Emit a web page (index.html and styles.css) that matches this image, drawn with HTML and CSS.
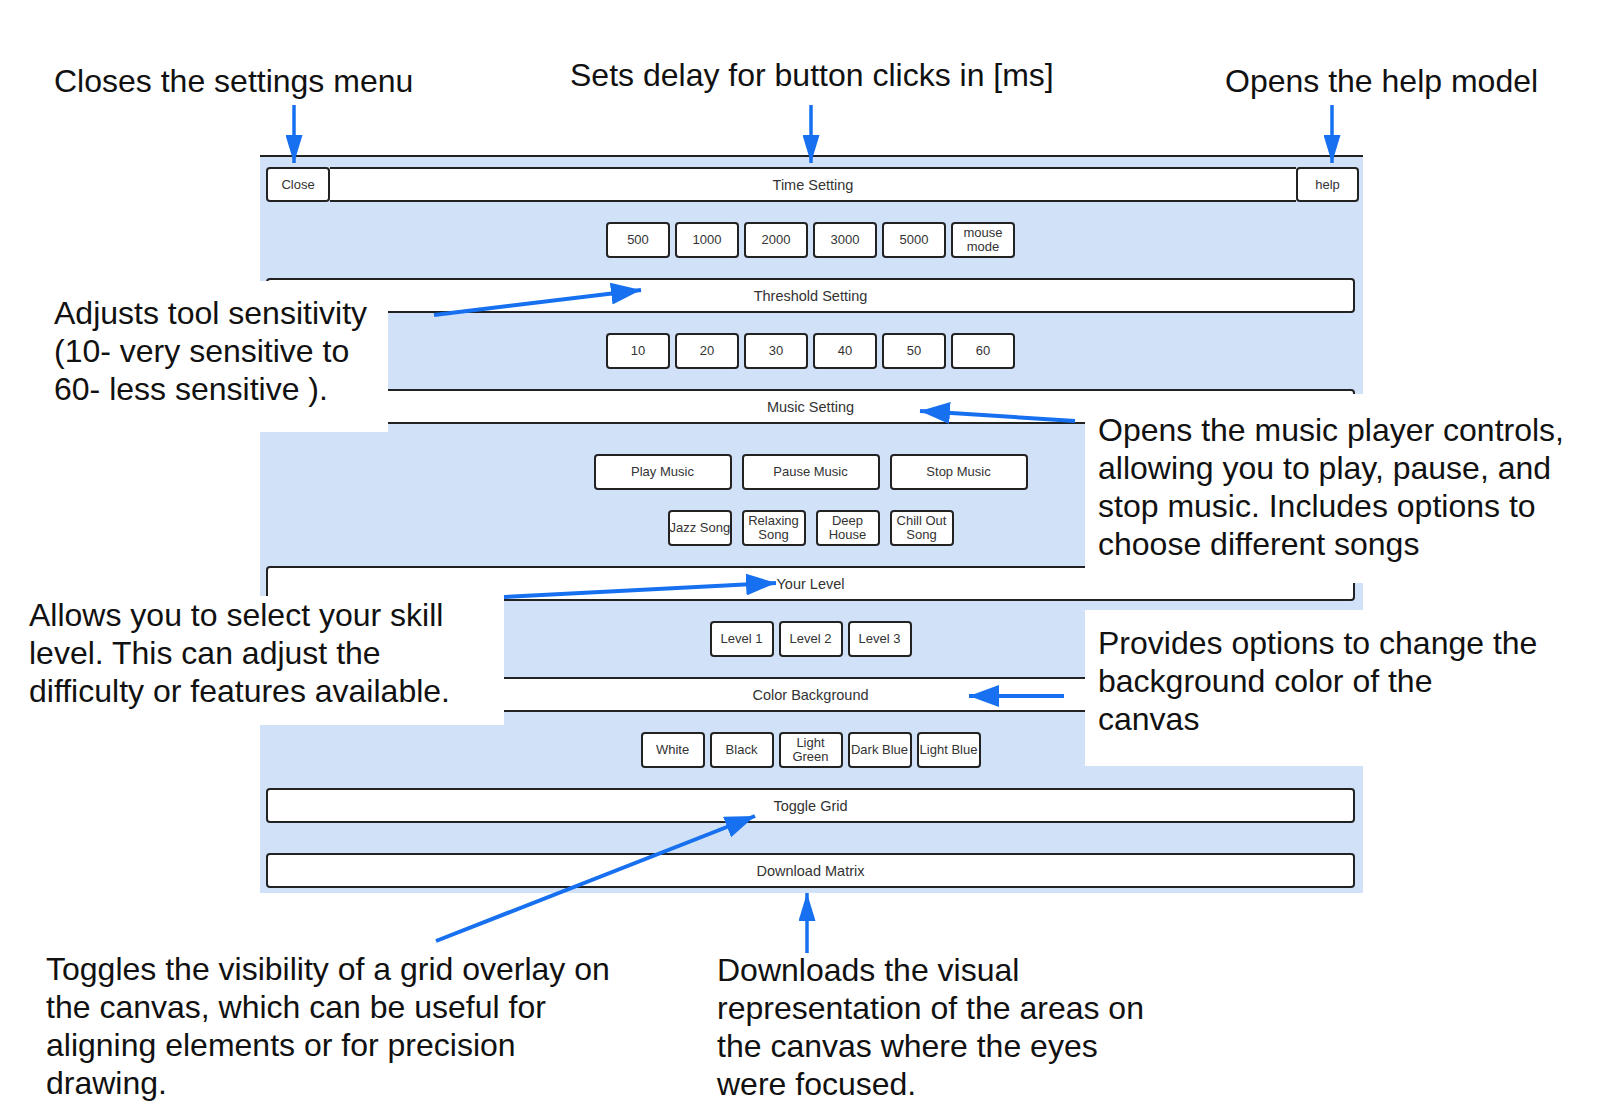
FILE: index.html
```html
<!DOCTYPE html>
<html lang="en">
<head>
    <meta charset="UTF-8">
    <meta name="viewport" content="width=device-width, initial-scale=1.0">
    <title>Settings menu</title>
    <link rel="stylesheet" href="styles.css">
</head>
<body>
<div class="page">

    <div class="settings">
        <div class="topbar">
            <button class="btn-close">Close</button>
            <button class="bar bar-title">Time Setting</button>
            <button class="btn-help">help</button>
        </div>

        <div class="row">
            <button>500</button>
            <button>1000</button>
            <button>2000</button>
            <button>3000</button>
            <button>5000</button>
            <button>mouse mode</button>
        </div>

        <button class="bar">Threshold Setting</button>
        <div class="row">
            <button>10</button>
            <button>20</button>
            <button>30</button>
            <button>40</button>
            <button>50</button>
            <button>60</button>
        </div>

        <button class="bar">Music Setting</button>
        <div class="row row-music">
            <button class="btn-wide">Play Music</button>
            <button class="btn-wide">Pause Music</button>
            <button class="btn-wide">Stop Music</button>
        </div>
        <div class="row row-songs">
            <button class="nowrap">Jazz Song</button>
            <button>Relaxing Song</button>
            <button>Deep House</button>
            <button>Chill Out Song</button>
        </div>

        <button class="bar">Your Level</button>
        <div class="row">
            <button>Level 1</button>
            <button>Level 2</button>
            <button>Level 3</button>
        </div>

        <button class="bar">Color Background</button>
        <div class="row">
            <button>White</button>
            <button>Black</button>
            <button>Light Green</button>
            <button>Dark Blue</button>
            <button>Light Blue</button>
        </div>

        <button class="bar">Toggle Grid</button>
        <button class="bar bar-download">Download Matrix</button>
    </div>

    <!-- annotations -->
    <p class="note note-close">Closes the settings menu</p>
    <p class="note note-time">Sets delay for button clicks in [ms]</p>
    <p class="note note-help">Opens the help model</p>

    <div class="callout callout-threshold">
        <p>Adjusts tool sensitivity<br>(10- very sensitive to<br>60- less sensitive ).</p>
    </div>
    <div class="callout callout-music">
        <p>Opens the music player controls,<br>allowing you to play, pause, and<br>stop music. Includes options to<br>choose different songs</p>
    </div>
    <div class="callout callout-level">
        <p>Allows you to select your skill<br>level. This can adjust the<br>difficulty or features available.</p>
    </div>
    <div class="callout callout-color">
        <p>Provides options to change the<br>background color of the<br>canvas</p>
    </div>

    <p class="note note-grid">Toggles the visibility of a grid overlay on<br>the canvas, which can be useful for<br>aligning elements or for precision<br>drawing.</p>
    <p class="note note-download">Downloads the visual<br>representation of the areas on<br>the canvas where the eyes<br>were focused.</p>

    <svg class="arrows" width="1600" height="1114" viewBox="0 0 1600 1114">
        <defs>
            <marker id="head-thin" markerWidth="28" markerHeight="17" refX="28" refY="8.5" orient="auto" markerUnits="userSpaceOnUse">
                <path d="M0,0 L28,8.5 L0,17 z" fill="#1670f0"/>
            </marker>
            <marker id="head" markerWidth="30" markerHeight="22" refX="30" refY="11" orient="auto" markerUnits="userSpaceOnUse">
                <path d="M0,0 L30,11 L0,22 z" fill="#1670f0"/>
            </marker>
        </defs>
        <g stroke="#1670f0" stroke-width="3.5" fill="none">
            <line x1="294" y1="105" x2="294" y2="163" marker-end="url(#head-thin)"/>
            <line x1="811" y1="105" x2="811" y2="163" marker-end="url(#head-thin)"/>
            <line x1="1332" y1="105" x2="1332" y2="163" marker-end="url(#head-thin)"/>
            <line x1="807" y1="953" x2="807" y2="893" marker-end="url(#head-thin)"/>
        </g>
        <g stroke="#1670f0" stroke-width="4" fill="none">
            <line x1="434" y1="315" x2="641" y2="290" marker-end="url(#head)"/>
            <line x1="1075" y1="421" x2="920" y2="411" marker-end="url(#head)"/>
            <line x1="504" y1="597" x2="776" y2="583" marker-end="url(#head)"/>
            <line x1="1064" y1="696" x2="969" y2="696" marker-end="url(#head)"/>
            <line x1="436" y1="941" x2="755" y2="816" marker-end="url(#head)"/>
        </g>
    </svg>
</div>
</body>
</html>
```

FILE: styles.css
```css
body {
    margin: 0;
    background: #fff;
    font-family: "Liberation Sans", Arial, sans-serif;
}
.page {
    position: relative;
    width: 1600px;
    height: 1114px;
    padding: 155px 0 0 260px;
    box-sizing: border-box;
    overflow: hidden;
}
.settings {
    width: 1103px;
    box-sizing: border-box;
    background: #d0e1f8;
    border-top: 2px solid #222;
    padding: 10px 4px 5px 6px;
}
button {
    font-family: "Liberation Sans", Arial, sans-serif;
    font-size: 13px;
    line-height: 14px;
    color: #333;
    background: #fff;
    border: 2px solid #222;
    border-radius: 4px;
    width: 64px;
    height: 36px;
    padding: 0;
    box-sizing: border-box;
    cursor: pointer;
}
.nowrap {
    white-space: nowrap;
    overflow: visible;
}
.topbar {
    display: flex;
    height: 35px;
}
.topbar button {
    height: 35px;
}
.btn-close {
    width: 64px;
}
.btn-help {
    width: 63px;
}
.bar {
    display: block;
    width: calc(100% - 4px);
    height: 35px;
    font-size: 14.5px;
}
.topbar .bar-title {
    flex: 1;
    width: auto;
    border-left: none;
    border-right: none;
    border-radius: 0;
}
.row {
    display: flex;
    justify-content: center;
    gap: 5px;
    height: 36px;
    margin: 20px 4px 20px 0;
}
.row-music {
    margin-top: 30px;
    gap: 10px;
}
.row-songs {
    gap: 10px;
}
.btn-wide {
    width: 138px;
}
.bar-download {
    margin-top: 30px;
}

/* annotations */
.note,
.callout p {
    margin: 0;
    font-size: 32px;
    line-height: 38px;
    color: #111;
    white-space: nowrap;
}
.note {
    position: absolute;
}
.note-close { left: 54px; top: 62px; }
.note-time { left: 570px; top: 56px; }
.note-help { left: 1225px; top: 62px; }
.note-grid { left: 46px; top: 950px; }
.note-download { left: 717px; top: 951px; }

.callout {
    position: absolute;
    background: #fff;
    box-sizing: border-box;
}
.callout-threshold {
    left: 0;
    top: 281px;
    width: 388px;
    height: 151px;
    padding: 13px 0 0 54px;
}
.callout-music {
    left: 1085px;
    top: 394px;
    width: 515px;
    height: 189px;
    padding: 17px 0 0 13px;
}
.callout-level {
    left: 0;
    top: 596px;
    width: 504px;
    height: 129px;
    padding: 0 0 0 29px;
}
.callout-color {
    left: 1085px;
    top: 610px;
    width: 515px;
    height: 156px;
    padding: 14px 0 0 13px;
}
.arrows {
    position: absolute;
    left: 0;
    top: 0;
    pointer-events: none;
}
```
